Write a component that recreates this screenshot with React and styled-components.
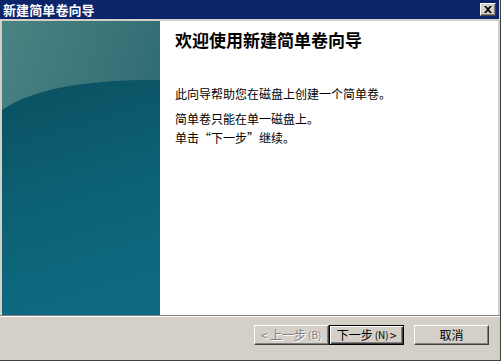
import React from "react";
import styled, { createGlobalStyle } from "styled-components";

const GlobalStyle = createGlobalStyle`
	html, body {
		margin: 0;
		padding: 0;
		background: #d4d0c8;
	}
	body {
		font-family: "Noto Sans CJK SC", "Liberation Sans", sans-serif;
	}
`;

const SideArt = () => (
	<svg width="158" height="294" viewBox="0 0 158 294">
		<defs>
			<linearGradient id="top" x1="0" y1="0" x2="1" y2="0.6">
				<stop offset="0" stopColor="#4b8383" />
				<stop offset="1" stopColor="#2a6870" />
			</linearGradient>
			<linearGradient id="bottom" x1="0" y1="0" x2="0.2" y2="1">
				<stop offset="0" stopColor="#0a5060" />
				<stop offset="0.5" stopColor="#0c5f72" />
				<stop offset="1" stopColor="#0e6a80" />
			</linearGradient>
		</defs>
		<rect width="158" height="294" fill="url(#top)" />
		<path d="M0,89 C30,68 85,58 158,59 L158,294 L0,294 Z" fill="url(#bottom)" />
	</svg>
);

const CloseIcon = () => (
	<svg width="8" height="7" viewBox="0 0 8 7">
		<path d="M0,0 L2,0 L4,2 L6,0 L8,0 L5,3.5 L8,7 L6,7 L4,5 L2,7 L0,7 L3,3.5 Z" fill="#000" />
	</svg>
);

const App = () => (
	<>
		<GlobalStyle />
		<Window>
			<TitleBar>
				<Caption>新建简单卷向导</Caption>
				<CloseButton>
					<CloseIcon />
				</CloseButton>
			</TitleBar>
			<Body>
				<Side>
					<SideArt />
				</Side>
				<Content>
					<Heading>欢迎使用新建简单卷向导</Heading>
					<Para gap={6}>此向导帮助您在磁盘上创建一个简单卷。</Para>
					<Para>简单卷只能在单一磁盘上。</Para>
					<Para>单击“下一步”继续。</Para>
				</Content>
			</Body>
			<Footer>
				<Button disabled>
					&lt; 上一步<Key>(B)</Key>
				</Button>
				<Button primary>
					下一步<Key>(N)</Key> &gt;
				</Button>
				<Button spaced>取消</Button>
			</Footer>
		</Window>
	</>
);

const Window = styled.div`
	width: 501px;
	height: 361px;
	box-sizing: border-box;
	display: flex;
	flex-direction: column;
	background: #d4d0c8;
	border-right: 1px solid #404040;
	border-bottom: 1px solid #404040;
	overflow: hidden;
`;

const TitleBar = styled.div`
	height: 19px;
	margin-right: 1px;
	display: flex;
	align-items: center;
	justify-content: space-between;
	padding: 0 3px 0 3px;
	background: #0c246a;
	flex-shrink: 0;
`;

const Caption = styled.div`
	color: #fff;
	font-size: 13px;
	font-weight: bold;
	line-height: 19px;
	letter-spacing: 0.1px;
`;

const CloseButton = styled.div`
	width: 16px;
	height: 13px;
	box-sizing: border-box;
	display: flex;
	align-items: center;
	justify-content: center;
	background: #d4d0c8;
	border: 1px solid;
	border-color: #fff #404040 #404040 #fff;
	box-shadow: inset -1px -1px #808080;
`;

const Body = styled.div`
	height: 294px;
	margin: 2px 2px 0 2px;
	display: flex;
	flex-shrink: 0;
	background: #fff;
`;

const Side = styled.div`
	width: 158px;
	height: 294px;
	flex-shrink: 0;
	svg {
		display: block;
	}
`;

const Content = styled.div`
	flex: 1;
	padding: 9px 0 0 15px;
	color: #000;
`;

const Heading = styled.div`
	font-size: 17px;
	font-weight: bold;
	line-height: 20px;
	margin-bottom: 34px;
`;

const Para = styled.div`
	font-size: 12px;
	line-height: 19px;
	margin-bottom: ${({ gap }) => gap || 0}px;
`;

const Footer = styled.div`
	flex: 1;
	display: flex;
	justify-content: flex-end;
	align-items: flex-start;
	padding: 9px 11px 0 0;
	border-top: 1px solid #808080;
	box-shadow: inset 0 1px #fff;
`;

const Button = styled.div`
	width: 75px;
	height: 20px;
	box-sizing: border-box;
	display: flex;
	align-items: center;
	justify-content: center;
	margin-left: ${({ spaced }) => (spaced ? 10 : 0)}px;
	font-size: 12px;
	line-height: 14px;
	background: #d4d0c8;
	color: ${({ disabled }) => (disabled ? "#808080" : "#000")};
	text-shadow: ${({ disabled }) => (disabled ? "1px 1px #fff" : "none")};
	border: 1px solid;
	border-color: ${({ primary }) =>
		primary ? "#000" : "#fff #404040 #404040 #fff"};
	box-shadow: ${({ primary }) =>
		primary
			? "inset 1px 1px #fff, inset -1px -1px #404040, inset -2px -2px #808080"
			: "inset -1px -1px #808080"};
	white-space: nowrap;
`;

const Key = styled.span`
	font-size: 10px;
	margin: 0 1px 0 2px;
`;

export default App;
